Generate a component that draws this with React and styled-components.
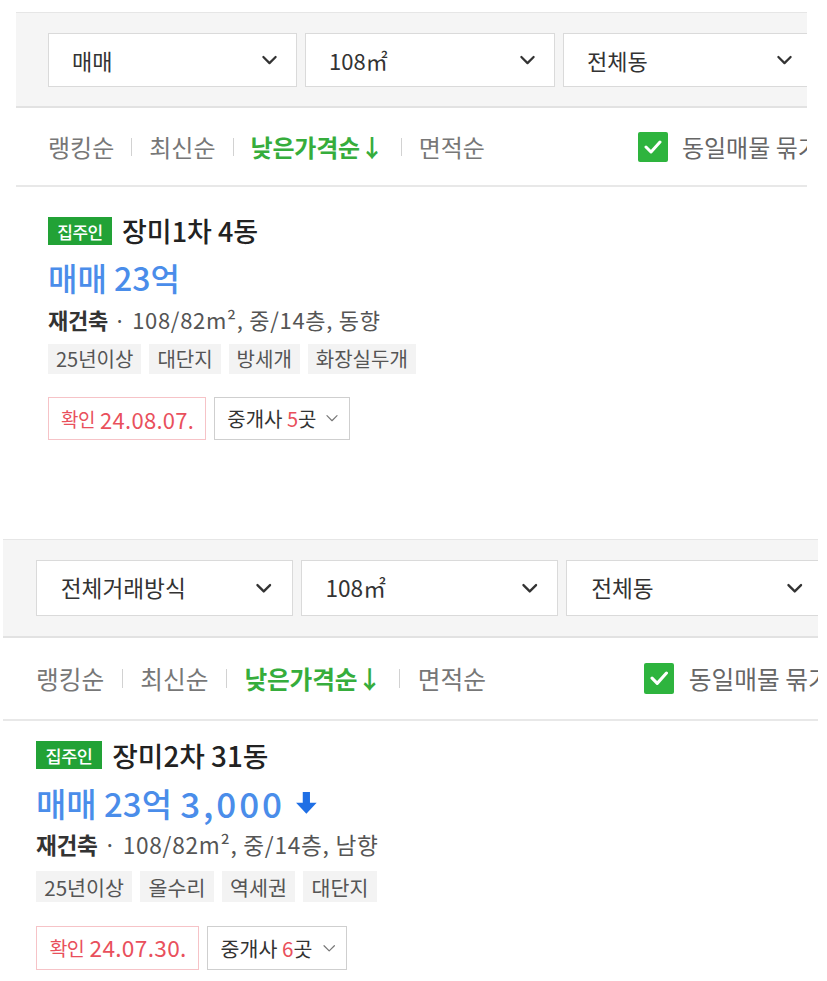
import React from "react";
import styled, { createGlobalStyle } from "styled-components";

const Global = createGlobalStyle`
  html, body { margin: 0; padding: 0; background: #fff; }
  body { font-family: "Noto Sans CJK KR", "Noto Sans", sans-serif; color: #333; }
  * { box-sizing: border-box; }
`;

const Page = styled.main`
  padding-top: 12px;
  width: 827px;
  overflow: hidden;
`;

const Panel = styled.section`
  width: 791px;
  margin-left: ${(p) => p.$left}px;
  margin-top: ${(p) => p.$top}px;
  zoom: ${(p) => p.$zoom};
  overflow: hidden;
`;

const FilterBar = styled.div`
  display: flex;
  gap: 8px;
  padding: 20px 0 19px 32px;
  background: #f5f5f5;
  border-top: 1px solid #e6e6e6;
  border-bottom: 2px solid #e2e2e2;
`;

const Select = styled.div`
  flex-shrink: 0;
  width: ${(p) => p.$w}px;
  height: 54px;
  background: #fff;
  border: 1px solid #dadada;
  display: flex;
  align-items: center;
  justify-content: space-between;
  padding: 0 18px 0 23px;
  font-size: 22px;
  color: #333;
  line-height: 1;
`;

const SortRow = styled.div`
  display: flex;
  align-items: center;
  height: ${(p) => p.$h}px;
  padding-left: 32px;
  border-bottom: 2px solid #e8e8e8;
  font-size: 24px;
  line-height: 1;
  white-space: nowrap;
`;

const SortItem = styled.span`
  color: ${(p) => (p.$active ? "#36ad3c" : "#777")};
  font-weight: ${(p) => (p.$active ? 700 : 400)};
  letter-spacing: ${(p) => (p.$active ? "-0.2px" : "0")};
`;

const Sep = styled.i`
  display: block;
  flex-shrink: 0;
  width: 1px;
  height: 18px;
  background: #d2d2d2;
  margin: 0 17px;
`;

const Bundle = styled.label`
  display: flex;
  align-items: center;
  gap: 14px;
  margin-left: ${(p) => p.$gap}px;
  color: #666;
`;

const Check = styled.span`
  width: 30px;
  height: 30px;
  border-radius: 2px;
  background: #2eb43e;
  display: flex;
  align-items: center;
  justify-content: center;
`;

const Listing = styled.article`
  padding: ${(p) => p.$pt}px 0 0 32px;
`;

const TitleRow = styled.div`
  display: flex;
  align-items: center;
  gap: 10px;
  height: 28px;
`;

const Badge = styled.span`
  width: 64px;
  height: 28px;
  background: #22a236;
  color: #fff;
  font-size: 17px;
  font-weight: 500;
  display: flex;
  align-items: center;
  justify-content: center;
  letter-spacing: -0.5px;
`;

const Title = styled.h2`
  margin: 0;
  font-size: 27px;
  font-weight: 500;
  color: #222;
  line-height: 28px;
`;

const Price = styled.div`
  margin-top: 14px;
  display: flex;
  align-items: center;
  gap: 8px;
  font-size: 32px;
  line-height: 36px;
  font-weight: 500;
  color: #4a8dea;
  svg { margin-left: 1px; }
`;

const Amount = styled.span`
  font-size: ${(p) => (p.$wide ? "34px" : "inherit")};
  letter-spacing: ${(p) => (p.$wide ? "2.8px" : "0")};
`;

const Detail = styled.div`
  margin-top: 11px;
  font-size: 22px;
  line-height: 26px;
  color: #555;
  letter-spacing: 0.7px;
  strong { color: #333; font-weight: 700; letter-spacing: -0.3px; }
`;

const Tags = styled.div`
  display: flex;
  gap: 8px;
  margin-top: 12px;
`;

const Tag = styled.span`
  height: 30px;
  padding: 0 8px;
  background: #f3f3f3;
  color: #555;
  font-size: 20px;
  display: flex;
  align-items: center;
  line-height: 1;
`;

const Actions = styled.div`
  display: flex;
  gap: 8px;
  margin-top: 23px;
`;

const Confirm = styled.span`
  height: 43px;
  padding: 0 11px 0 12px;
  border: 1px solid #f6c3c7;
  color: #e9505c;
  font-size: 22px;
  display: flex;
  align-items: center;
  gap: 5px;
  line-height: 1;
  small { font-size: 19px; letter-spacing: -0.5px; }
  span { letter-spacing: 0.3px; }
`;

const Agents = styled.button`
  height: 43px;
  padding: 0 10px 0 12px;
  border: 1px solid #cfcfcf;
  background: #fff;
  color: #333;
  font-family: inherit;
  font-size: 20px;
  display: flex;
  align-items: center;
  gap: 9px;
  line-height: 1;
  em { font-style: normal; color: #e9505c; }
`;

const Chevron = ({ size = 17, color = "#333", w = 2.2 }) => (
  <svg width={size} height={size * 0.6} viewBox="0 0 16 10" fill="none">
    <polyline points="2,2 8,8 14,2" stroke={color} strokeWidth={w} strokeLinecap="round" strokeLinejoin="round" />
  </svg>
);

const DownArrow = () => (
  <svg width="24" height="23" viewBox="0 0 24 23">
    <path d="M8.5 1h7v10.5h6.5l-10 10.5-10-10.5h6.5z" fill="#1f6fe5" />
  </svg>
);

const CheckMark = () => (
  <svg width="18" height="14" viewBox="0 0 18 14" fill="none">
    <polyline points="2,7 7,12 16,2" stroke="#fff" strokeWidth="3" strokeLinecap="round" strokeLinejoin="round" />
  </svg>
);

const panels = [
  {
    left: 16, top: 0, zoom: 1, sortH: 79, pt: 30,
    trade: "매매",
    title: "장미1차 4동",
    price: ["매매 23억"],
    down: false,
    detail: "108/82m², 중/14층, 동향",
    tags: ["25년이상", "대단지", "방세개", "화장실두개"],
    date: "24.08.07.",
    agents: 5,
  },
  {
    left: 3, top: 96, zoom: 1.03, sortH: 81, pt: 19,
    trade: "전체거래방식",
    title: "장미2차 31동",
    price: ["매매 23억", "3,000"],
    down: true,
    detail: "108/82m², 중/14층, 남향",
    tags: ["25년이상", "올수리", "역세권", "대단지"],
    date: "24.07.30.",
    agents: 6,
  },
];

export default function App() {
  return (
    <Page>
      <Global />
      {panels.map((p, i) => (
        <Panel key={i} $left={p.left} $top={p.top} $zoom={p.zoom}>
          <FilterBar>
            <Select $w={249}><span>{p.trade}</span><Chevron /></Select>
            <Select $w={250}><span>108㎡</span><Chevron /></Select>
            <Select $w={249}><span>전체동</span><Chevron /></Select>
          </FilterBar>
          <SortRow $h={p.sortH}>
            <SortItem>랭킹순</SortItem>
            <Sep />
            <SortItem>최신순</SortItem>
            <Sep />
            <SortItem $active>낮은가격순↓</SortItem>
            <Sep />
            <SortItem>면적순</SortItem>
            <Bundle $gap={153}>
              <Check><CheckMark /></Check>
              <span>동일매물 묶기</span>
            </Bundle>
          </SortRow>
          <Listing $pt={p.pt}>
            <TitleRow>
              <Badge>집주인</Badge>
              <Title>{p.title}</Title>
            </TitleRow>
            <Price>
              {p.price.map((part, k) => (
                <Amount key={k} $wide={k > 0}>{part}</Amount>
              ))}
              {p.down && <DownArrow />}
            </Price>
            <Detail>
              <strong>재건축</strong> · {p.detail}
            </Detail>
            <Tags>
              {p.tags.map((t) => <Tag key={t}>{t}</Tag>)}
            </Tags>
            <Actions>
              <Confirm><small>확인</small><span>{p.date}</span></Confirm>
              <Agents>
                <span>중개사 <em>{p.agents}</em>곳</span>
                <Chevron size={14} color="#777" w={1.4} />
              </Agents>
            </Actions>
          </Listing>
        </Panel>
      ))}
    </Page>
  );
}
